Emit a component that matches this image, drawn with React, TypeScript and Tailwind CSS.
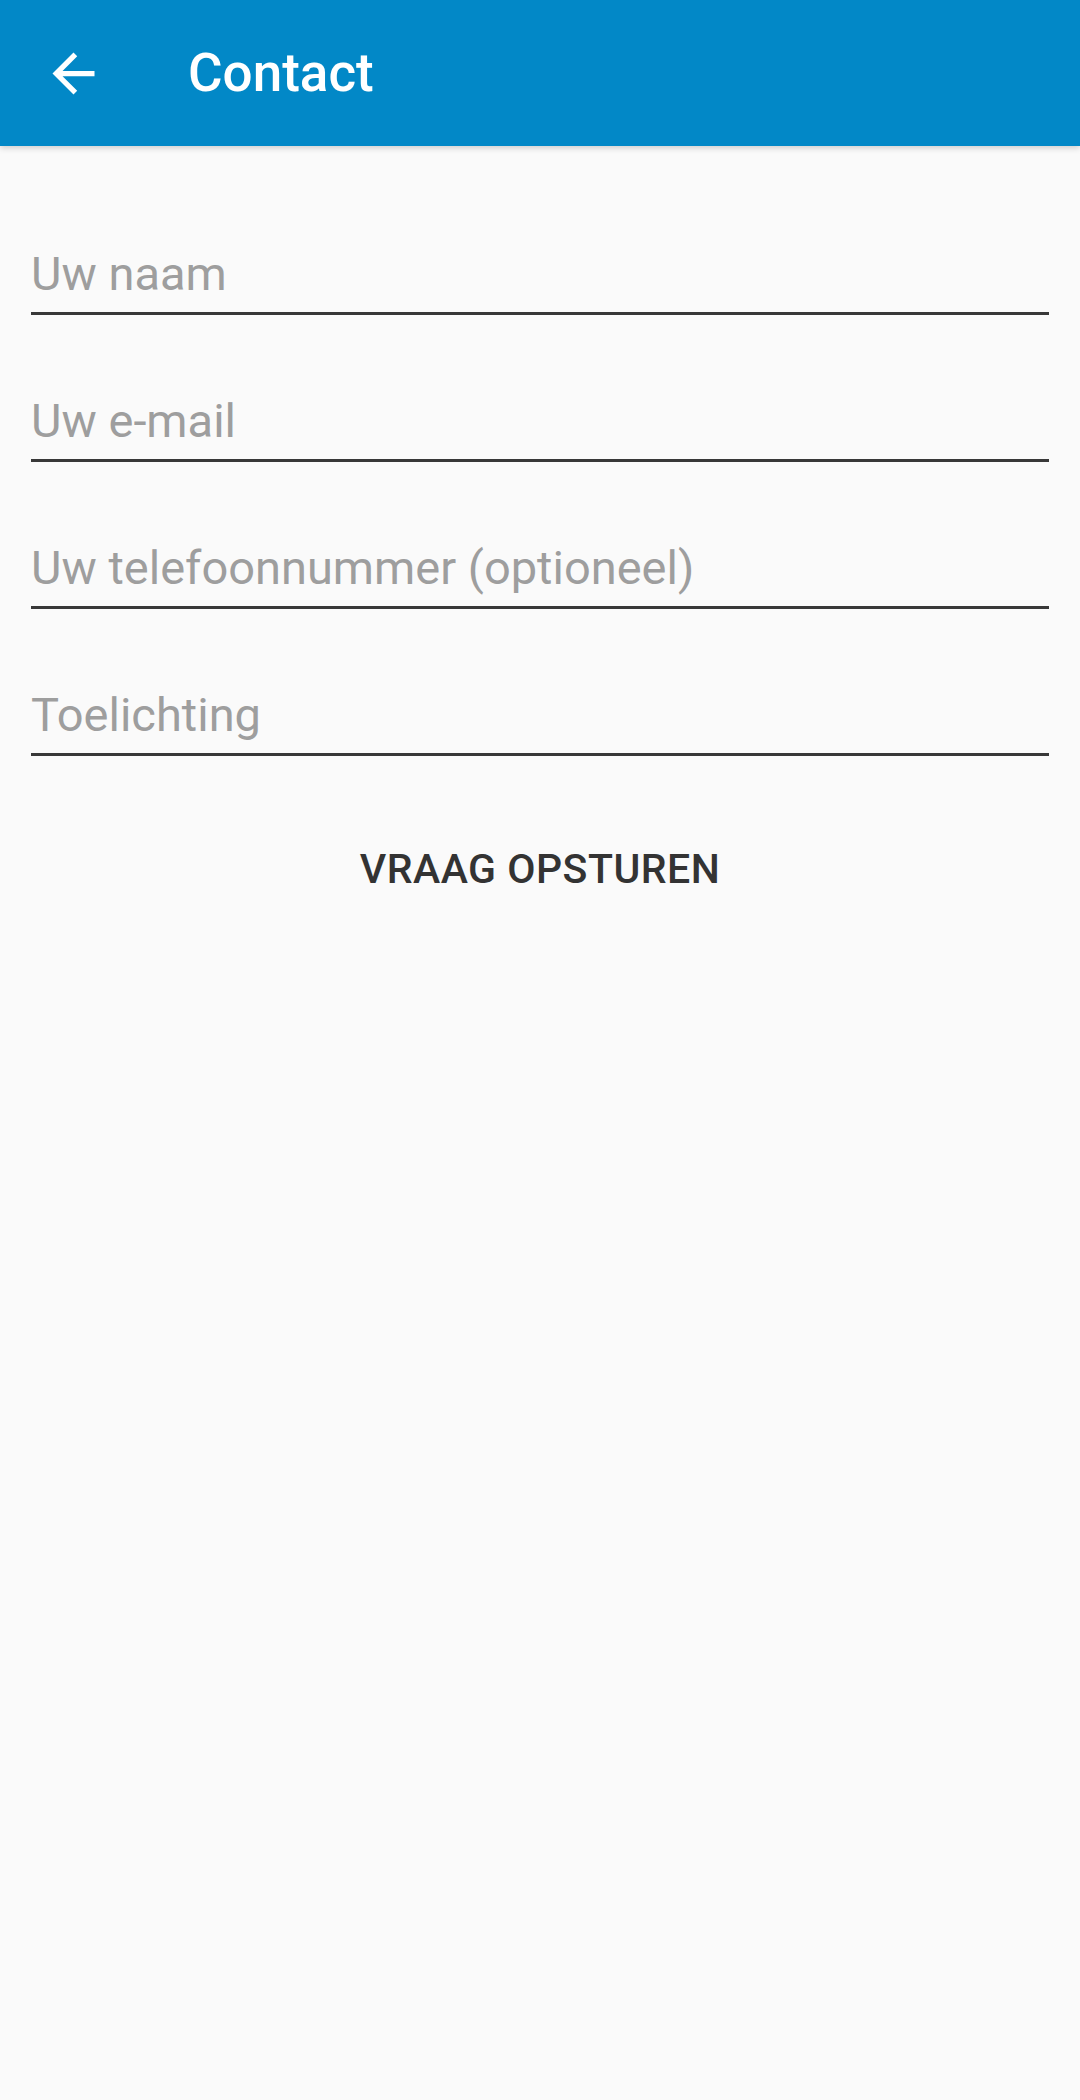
import { useState } from "react";

const fields = [
  { name: "naam", placeholder: "Uw naam", type: "text" },
  { name: "email", placeholder: "Uw e-mail", type: "email" },
  { name: "telefoon", placeholder: "Uw telefoonnummer (optioneel)", type: "tel" },
  { name: "toelichting", placeholder: "Toelichting", type: "text" },
];

function ArrowBack() {
  return (
    <svg viewBox="0 0 24 24" className="h-[63px] w-[63px]" fill="white">
      <path d="M20 11H7.83l5.59-5.59L12 4l-8 8 8 8 1.41-1.41L7.83 13H20v-2z" />
    </svg>
  );
}

export default function App() {
  const [values, setValues] = useState<Record<string, string>>({});

  return (
    <div className="min-h-[2100px] w-full bg-[#fafafa] font-[Roboto,sans-serif]">
      <header className="relative z-10 flex h-[146px] items-center bg-[#0288c7] shadow-[0_2px_6px_rgba(0,0,0,0.18)]">
        <button className="ml-[42px] flex items-center justify-center" aria-label="Terug">
          <ArrowBack />
        </button>
        <h1 className="ml-[83px] text-[53px] font-medium leading-none text-white">Contact</h1>
      </header>

      <form
        className="flex flex-col px-[31px] pt-[101px]"
        onSubmit={(e) => e.preventDefault()}
      >
        <div className="flex flex-col gap-[79px]">
          {fields.map((f) => (
            <div key={f.name} className="border-b-[3px] border-[#383838] pb-[10px]">
              <input
                type={f.type}
                placeholder={f.placeholder}
                value={values[f.name] ?? ""}
                onChange={(e) => setValues({ ...values, [f.name]: e.target.value })}
                className="block h-[55px] w-full bg-transparent p-0 text-[47px] text-[#333] outline-none placeholder:text-[#9e9e9e]"
              />
            </div>
          ))}
        </div>

        <button
          type="submit"
          className="mt-[51px] flex h-[126px] items-center justify-center self-center px-4 text-[41px] font-medium tracking-[0.5px] text-[#333]"
        >
          VRAAG OPSTUREN
        </button>
      </form>
    </div>
  );
}
